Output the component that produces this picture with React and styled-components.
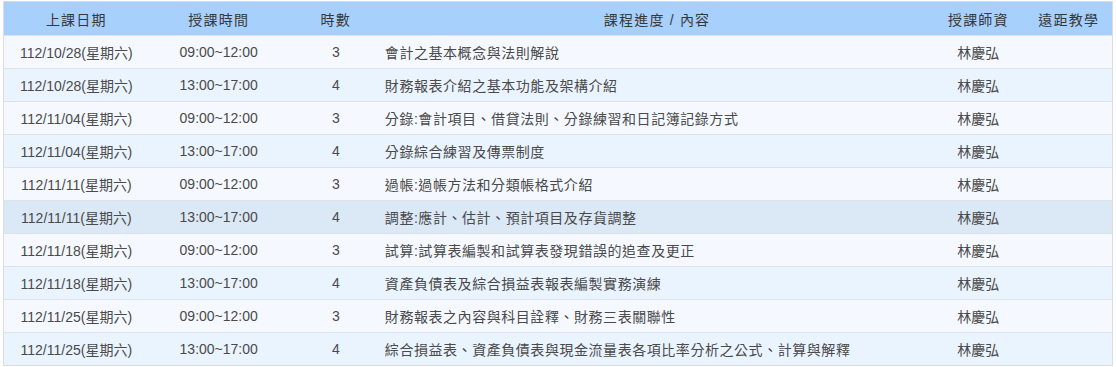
import React from 'react'
import styled, { createGlobalStyle } from 'styled-components'

const GlobalStyle = createGlobalStyle`
  body {
    margin: 0;
    background: #fff;
    font-family: "Liberation Sans", Arial, "Noto Sans CJK TC", sans-serif;
  }
`;

const Wrap = styled.div`
  padding: 1px 3px 0 3px;
`;

const Table = styled.table`
  width: 1110px;
  border-collapse: collapse;
  table-layout: fixed;
  border: 1px solid #dcdcdc;
  font-size: 14px;
  color: #4a4a4a;
`;

const Th = styled.th`
  background: #a7d0fd;
  height: 33px;
  padding: 0;
  font-weight: normal;
  color: #383838;
  text-align: center;
  letter-spacing: 1.2px;
`;

const Row = styled.tr`
  background: ${(p) => (p.$active ? '#dbe8f6' : p.$even ? '#eaf4ff' : '#f5f9ff')};
  border-top: 1px solid #dde3ea;
`;

const Td = styled.td`
  height: 32px;
  padding: 0 ${(p) => (p.$left ? '2px' : '0')};
  text-align: ${(p) => (p.$left ? 'left' : 'center')};
  white-space: nowrap;
  letter-spacing: ${(p) => (p.$left ? '0.55px' : '0')};
`;

const lessons = [
  ['112/10/28(星期六)', '09:00~12:00', 3, '會計之基本概念與法則解說'],
  ['112/10/28(星期六)', '13:00~17:00', 4, '財務報表介紹之基本功能及架構介紹'],
  ['112/11/04(星期六)', '09:00~12:00', 3, '分錄:會計項目、借貸法則、分錄練習和日記簿記錄方式'],
  ['112/11/04(星期六)', '13:00~17:00', 4, '分錄綜合練習及傳票制度'],
  ['112/11/11(星期六)', '09:00~12:00', 3, '過帳:過帳方法和分類帳格式介紹'],
  ['112/11/11(星期六)', '13:00~17:00', 4, '調整:應計、估計、預計項目及存貨調整'],
  ['112/11/18(星期六)', '09:00~12:00', 3, '試算:試算表編製和試算表發現錯誤的追查及更正'],
  ['112/11/18(星期六)', '13:00~17:00', 4, '資產負債表及綜合損益表報表編製實務演練'],
  ['112/11/25(星期六)', '09:00~12:00', 3, '財務報表之內容與科目詮釋、財務三表關聯性'],
  ['112/11/25(星期六)', '13:00~17:00', 4, '綜合損益表、資產負債表與現金流量表各項比率分析之公式、計算與解釋'],
];

export default function App() {
  return (
    <Wrap>
      <GlobalStyle />
      <Table>
        <colgroup>
          <col style={{ width: 145 }} />
          <col style={{ width: 140 }} />
          <col style={{ width: 94 }} />
          <col style={{ width: 548 }} />
          <col style={{ width: 94 }} />
          <col style={{ width: 87 }} />
        </colgroup>
        <thead>
          <tr>
            <Th>上課日期</Th>
            <Th>授課時間</Th>
            <Th>時數</Th>
            <Th>課程進度 / 內容</Th>
            <Th>授課師資</Th>
            <Th>遠距教學</Th>
          </tr>
        </thead>
        <tbody>
          {lessons.map(([date, time, hours, topic], i) => (
            <Row key={i} $even={i % 2 === 1} $active={i === 5}>
              <Td>{date}</Td>
              <Td>{time}</Td>
              <Td>{hours}</Td>
              <Td $left>{topic}</Td>
              <Td>林慶弘</Td>
              <Td></Td>
            </Row>
          ))}
        </tbody>
      </Table>
    </Wrap>
  )
}
